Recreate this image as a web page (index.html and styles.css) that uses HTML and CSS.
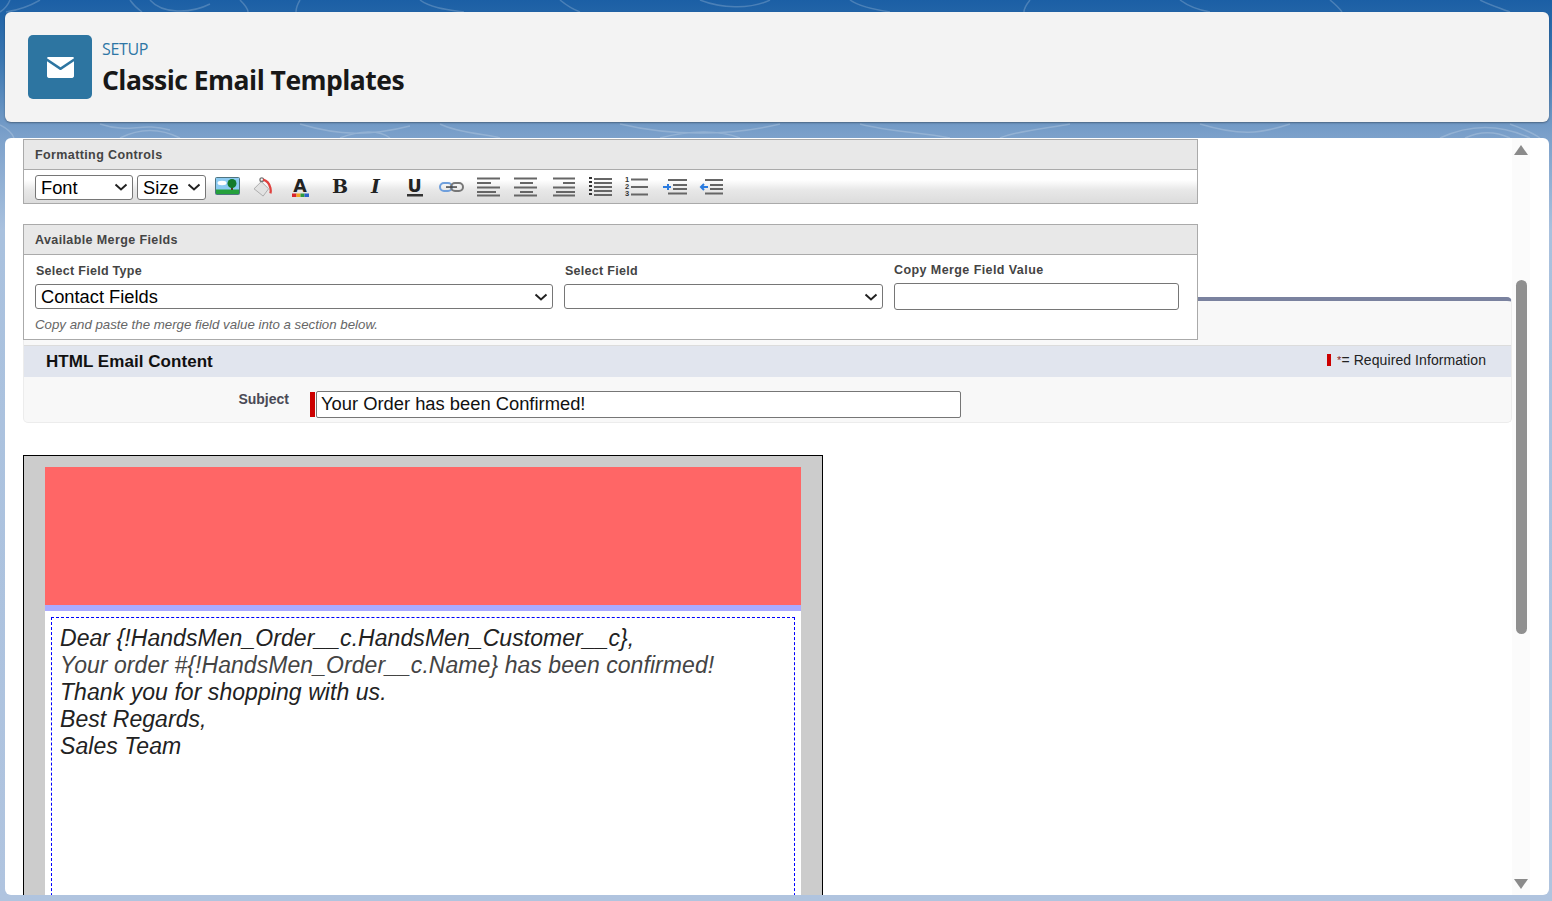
FILE: index.html
```html
<!DOCTYPE html>
<html lang="en">

<head>
    <meta charset="UTF-8">
    <meta name="viewport" content="width=device-width, initial-scale=1.0">
    <title>Classic Email Templates</title>
    <link rel="stylesheet" href="styles.css">
</head>

<body>
    <svg class="contours" viewBox="0 0 1552 901" aria-hidden="true">
        <g fill="none" stroke="#fff" stroke-opacity="0.2" stroke-width="1.5">
            <path d="M10 0C8 5 5 9 0 12M40 0c-10 6-22 10-34 12M130 0c4 6 8 9 12 12M150 0c12 14 40 14 60 4M240 0c6 6 8 9 8 12M300 0c-3 5-4 8-4 12M420 0c10 8 30 10 44 12M560 0c6 5 12 9 20 12M700 0c20 8 50 10 70 0M850 0c10 7 26 10 40 12M1030 0c-4 5-6 8-6 12M1180 0c8 6 18 10 30 12M1330 0c6 5 10 9 12 12M1480 0c10 5 20 8 30 12"/>
            <path d="M100 124c30 10 40-2 70 6M120 138c20-10 40-10 60 0M300 124c40 12 70 12 110 2M340 138c20-8 40-8 50 0M440 124c20 10 50 10 60 14M620 124c50 12 110 12 160 0M660 138c30-8 60-8 80 0M860 124c30 8 60 8 90 14M1000 138c20-8 50-10 70-14M1200 124c40 12 60 10 90 0M1440 138c30-14 60-14 90 0M1465 138c15-7 30-7 45 0"/>
            <path d="M0 125c8 4 12 8 14 13M1510 124c10 4 22 8 30 14"/>
        </g>
    </svg>

    <header class="page-header">
        <div class="header-icon">
            <svg width="27" height="21" viewBox="1 1 26 20">
                <path fill="#fff" d="M2.500 1h23c.8 0 1.400.4 1.500 1.100L14 10.800 1 2.100C1.100 1.400 1.700 1 2.500 1z"/>
                <path fill="#fff" d="M1 5l12.500 8.300c.3.200.7.200 1 0L27 5v14.200c0 1-.8 1.800-1.800 1.800H2.800c-1 0-1.800-.8-1.800-1.800z"/>
            </svg>
        </div>
        <div class="header-text">
            <div class="header-eyebrow">SETUP</div>
            <h1 class="header-title">Classic Email Templates</h1>
        </div>
    </header>

    <main class="content-panel">
        <div class="content">
            <section class="tool-box">
                <h2 class="tool-box-title">Formatting Controls</h2>
                <div class="toolbar">
                    <select class="select font-select"><option>Font</option></select>
                    <select class="select size-select"><option>Size</option></select>
                    <div class="toolbar-icons">
                        <svg class="tool" viewBox="0 0 25 20">
                            <rect x="0.500" y="0.500" width="24" height="17" rx="1" fill="#8ccbf2" stroke="#4f7480"/>
                            <rect x="1" y="12.500" width="23" height="4.500" fill="#25a03c"/>
                            <ellipse cx="7" cy="6" rx="4.500" ry="2.200" fill="#fff"/>
                            <rect x="16" y="8" width="2" height="5" fill="#5a3c1a"/>
                            <circle cx="17" cy="6.500" r="4.500" fill="#137a2a"/>
                        </svg>
                        <svg class="tool" viewBox="0 0 25 22">
                            <path d="M1 13l8-8 8 8-6 8z" fill="#e2e2e2" stroke="#a8a8a8"/>
                            <circle cx="9.500" cy="3" r="2" fill="none" stroke="#777" stroke-width="1.500"/>
                            <path d="M11 3c4 1 7 5 8 9 .5 2 .5 4 0 6" fill="none" stroke="#e0413e" stroke-width="2.500"/>
                        </svg>
                        <svg class="tool" viewBox="0 0 25 20">
                            <text x="11" y="15" class="tool-letter tool-sans">A</text>
                            <rect x="3" y="16.500" width="4.500" height="3.500" fill="#d9232b"/>
                            <rect x="7.500" y="16.500" width="4" height="3.500" fill="#f2a51e"/>
                            <rect x="11.500" y="16.500" width="4" height="3.500" fill="#2c9c3f"/>
                            <rect x="15.500" y="16.500" width="4.500" height="3.500" fill="#2a62c9"/>
                        </svg>
                        <svg class="tool" viewBox="0 0 25 20"><text x="14" y="16" class="tool-letter">B</text></svg>
                        <svg class="tool" viewBox="0 0 25 20"><text x="12.500" y="16" class="tool-letter tool-italic">I</text></svg>
                        <svg class="tool" viewBox="0 0 25 20">
                            <text x="14.500" y="15" class="tool-letter tool-sans">U</text>
                            <rect x="7" y="17" width="16" height="2.500" fill="#333"/>
                        </svg>
                        <svg class="tool" viewBox="0 0 25 20">
                            <rect x="3" y="6" width="12" height="8" rx="4" fill="none" stroke="#6f9fdc" stroke-width="2"/>
                            <rect x="14" y="6" width="12" height="8" rx="4" fill="none" stroke="#777" stroke-width="2"/>
                            <rect x="9" y="9.300" width="11" height="1.500" fill="#444"/>
                        </svg>
                        <svg class="tool" viewBox="0 0 25 20"><path class="lines" d="M3 1.500h23M3 6h14M3 10.500h23M3 15h19M3 18.500h23"/></svg>
                        <svg class="tool" viewBox="0 0 25 20"><path class="lines" d="M3 1.500h23M9 6h13M3 10.500h23M9 15h13M3 18.500h23"/></svg>
                        <svg class="tool" viewBox="0 0 25 20"><path class="lines" d="M5 1.500h22M15 6h12M5 10.500h22M8 15h19M5 18.500h22"/></svg>
                        <svg class="tool" viewBox="0 0 25 20">
                            <path class="lines" d="M9 2h18M9 6h18M9 10h18M9 14h18M9 18h18"/>
                            <path class="dots" d="M5.500 0v20"/>
                        </svg>
                        <svg class="tool" viewBox="0 0 25 20">
                            <path class="lines" d="M9 2.500h17M9 10h17M9 17.500h17"/>
                            <text x="5" y="5" class="tool-num">1</text>
                            <text x="5" y="12" class="tool-num">2</text>
                            <text x="5" y="19" class="tool-num">3</text>
                        </svg>
                        <svg class="tool" viewBox="0 0 25 20">
                            <path class="lines" d="M9 3h19M14 8h14M14 12h14M9 16.500h19"/>
                            <path class="arrow" d="M4 10h8M9 7v6"/>
                        </svg>
                        <svg class="tool" viewBox="0 0 25 20">
                            <path class="lines" d="M9 3h18M14 8h13M14 12h13M9 16.500h18"/>
                            <path class="arrow" d="M5 10h7M8 7l-3 3 3 3"/>
                        </svg>
                    </div>
                </div>
            </section>

            <section class="tool-box merge-box">
                <h2 class="tool-box-title">Available Merge Fields</h2>
                <div class="merge-body">
                    <div class="merge-row">
                        <div class="merge-col col-type">
                            <label class="merge-label">Select Field Type</label>
                            <select class="select field-select"><option>Contact Fields</option></select>
                        </div>
                        <div class="merge-col col-field">
                            <label class="merge-label">Select Field</label>
                            <select class="select field-select"><option></option></select>
                        </div>
                        <div class="merge-col col-copy">
                            <label class="merge-label">Copy Merge Field Value</label>
                            <input class="copy-input" type="text">
                        </div>
                    </div>
                    <p class="merge-hint">Copy and paste the merge field value into a section below.</p>
                </div>
            </section>

            <section class="form-block">
                <div class="form-spacer"></div>
                <div class="form-heading">
                    <h3>HTML Email Content</h3>
                    <span class="req-legend"><i class="req-mark"></i><span class="req-star">*</span>= Required Information</span>
                </div>
                <div class="subject-row">
                    <label class="subject-label">Subject</label>
                    <i class="req-bar"></i>
                    <input class="subject-input" type="text" value="Your Order has been Confirmed!">
                </div>
            </section>

            <section class="letterhead">
                <div class="letter-top"></div>
                <div class="letter-rule"></div>
                <div class="letter-page">
                    <div class="letter-text">
                        <div>Dear {!HandsMen_Order__c.HandsMen_Customer__c},</div>
                        <div class="grey-line">Your order #{!HandsMen_Order__c.Name} has been confirmed!</div>
                        <div>Thank you for shopping with us.</div>
                        <div>Best Regards,</div>
                        <div>Sales Team</div>
                    </div>
                </div>
            </section>
        </div>

        <div class="scroll-track">
            <i class="arrow-up"></i>
            <i class="scroll-thumb"></i>
            <i class="arrow-down"></i>
        </div>
    </main>
</body>

</html>
```

FILE: styles.css
```css
html,
body {
    height: 100%;
}

body {
    position: relative;
    box-sizing: border-box;
    height: 901px;
    margin: 0;
    padding: 12px 3px 6px 5px;
    overflow: hidden;
    display: flex;
    flex-direction: column;
    gap: 16px;
    font-family: "Liberation Sans", Arial, sans-serif;
    background: linear-gradient(180deg, #1b5fa5 0, #3a76b0 60px, #7ba0ca 135px, #a9c1de 230px, #b0c4df 100%);
}

.contours {
    position: absolute;
    top: 0;
    left: 0;
    width: 1552px;
    height: 901px;
}

/* header card */
.page-header {
    position: relative;
    flex: none;
    box-sizing: border-box;
    height: 110px;
    display: flex;
    align-items: center;
    gap: 10px;
    padding: 0 23px;
    background-color: #f3f3f3;
    border-radius: 6px;
    box-shadow: 0 1px 2px rgba(0, 0, 0, 0.35);
}

.header-icon {
    width: 64px;
    height: 64px;
    display: flex;
    align-items: center;
    justify-content: center;
    background-color: #2d75a1;
    border-radius: 5px;
}

.header-text {
    margin-top: 1px;
}

.header-eyebrow {
    font-family: "Open Sans", sans-serif;
    font-size: 16px;
    line-height: 22px;
    letter-spacing: -0.35px;
    color: #2e76a5;
}

.header-title {
    margin: 2px 0 0;
    font-family: "Open Sans", sans-serif;
    font-size: 26.500px;
    font-weight: 700;
    line-height: 36px;
    letter-spacing: -0.52px;
    color: #181818;
}

/* main white panel */
.content-panel {
    position: relative;
    flex: 1;
    min-height: 0;
    display: flex;
    overflow: hidden;
    background-color: #fff;
    border-radius: 6px;
}

.content {
    flex: none;
    width: 1489px;
    padding: 1px 0 0 18px;
}

.tool-box {
    position: relative;
    z-index: 1;
    box-sizing: border-box;
    width: 1175px;
    margin-bottom: 20px;
    background-color: #fff;
    border: 1px solid #aaa;
}

.tool-box-title {
    margin: 0;
    box-sizing: border-box;
    height: 30px;
    padding-left: 11px;
    font-size: 12.500px;
    font-weight: 700;
    line-height: 31px;
    letter-spacing: 0.39px;
    color: #444;
    background-color: #e8e8e8;
    border-bottom: 1px solid #aaa;
}

.toolbar {
    box-sizing: border-box;
    height: 33px;
    display: flex;
    align-items: center;
    padding: 1px 0 0 11px;
    background: linear-gradient(180deg, #fff 0, #fff 30%, #e8e8e8 60%, #dcdcdc 100%);
}

.select {
    box-sizing: border-box;
    padding: 0 0 0 5px;
    font-family: "Liberation Sans", Arial, sans-serif;
    font-size: 18.300px;
    color: #000;
    appearance: none;
    background: #fff url("data:image/svg+xml,%3Csvg xmlns='http://www.w3.org/2000/svg' width='14' height='8' viewBox='0 0 14 8'%3E%3Cpath d='M1.500 1.500L7 6.500l5.500-5' fill='none' stroke='%23222' stroke-width='2'/%3E%3C/svg%3E") no-repeat right 4px center;
    border: 1px solid #767676;
    border-radius: 3px;
}

.font-select {
    width: 98px;
    height: 25px;
    margin-right: 4px;
}

.size-select {
    width: 69px;
    height: 25px;
    margin-right: 9px;
}

.toolbar-icons {
    display: flex;
    gap: 12px;
    height: 20px;
    margin-top: -1px;
}

.tool {
    width: 25px;
    height: 20px;
    overflow: visible;
}

.tool-letter {
    font-family: "DejaVu Serif", serif;
    font-size: 19px;
    font-weight: 700;
    text-anchor: middle;
    fill: #222;
}

.tool-sans {
    font-family: "DejaVu Sans", sans-serif;
    font-size: 17.500px;
}

.tool-italic {
    font-style: italic;
}

.tool-num {
    font-family: "Liberation Sans", sans-serif;
    font-size: 7.500px;
    font-weight: 700;
    fill: #333;
    text-anchor: middle;
}

.lines {
    fill: none;
    stroke: #666;
    stroke-width: 2;
}

.dots {
    fill: none;
    stroke: #333;
    stroke-width: 3;
    stroke-dasharray: 2 2;
}

.arrow {
    fill: none;
    stroke: #2a7be0;
    stroke-width: 2;
}

/* merge fields */
.merge-body {
    height: 84px;
    box-sizing: border-box;
    padding-top: 8px;
}

.merge-row {
    display: flex;
}

.merge-col {
    display: flex;
    flex-direction: column;
}

.merge-label {
    padding-left: 1px;
    font-size: 12.500px;
    font-weight: 700;
    line-height: 16px;
    letter-spacing: 0.28px;
    color: #444;
    margin-bottom: 5px;
}

.col-type {
    width: 518px;
    margin-left: 11px;
    margin-right: 11px;
}

.col-field {
    width: 319px;
    margin-right: 11px;
}

.col-copy {
    width: 285px;
    margin-top: -1px;
}

.col-copy .merge-label {
    padding-left: 0;
    letter-spacing: 0.42px;
}

.field-select {
    width: 100%;
    height: 25px;
}

.copy-input {
    box-sizing: border-box;
    width: 285px;
    height: 27px;
    background-color: #fff;
    border: 1px solid #767676;
    border-radius: 3px;
}

.merge-hint {
    margin: 7px 0 0 11px;
    font-size: 13.270px;
    font-style: italic;
    line-height: 16px;
    color: #666;
}

/* form block under the merge panel */
.form-block {
    box-sizing: border-box;
    width: 1489px;
    height: 126px;
    margin-top: -63px;
    margin-bottom: 32px;
    background-color: #f8f8f8;
    border: 1px solid #ececec;
    border-top: 4px solid #7a829f;
    border-radius: 5px;
}

.form-spacer {
    height: 44px;
    border-bottom: 1px solid #dcdcdc;
}

.form-heading {
    height: 31px;
    display: flex;
    align-items: center;
    justify-content: space-between;
    padding: 0 25px 0 22px;
    background-color: #e1e5ee;
}

.form-heading h3 {
    margin: 0;
    font-size: 17px;
    font-weight: 700;
    letter-spacing: 0.05px;
    color: #111;
}

.req-legend {
    display: flex;
    align-items: center;
    margin-top: -3px;
    font-size: 14px;
    letter-spacing: 0.08px;
    color: #222;
}

.req-mark {
    width: 4px;
    height: 12px;
    margin-right: 6px;
    margin-top: -1px;
    background-color: #c00;
}

.req-star {
    color: #8a1c1c;
    font-size: 11px;
}

.subject-row {
    display: flex;
    align-items: flex-start;
    padding-top: 14px;
}

.subject-label {
    box-sizing: border-box;
    width: 265px;
    text-align: right;
    font-size: 14px;
    font-weight: 700;
    line-height: 16px;
    color: #4a4a56;
}

.req-bar {
    width: 5px;
    height: 25px;
    margin-left: 21px;
    margin-top: 1px;
    background-color: #c00;
    margin-right: 1px;
}

.subject-input {
    box-sizing: border-box;
    width: 645px;
    height: 27px;
    padding: 0 4px 2px;
    font-family: "Liberation Sans", Arial, sans-serif;
    font-size: 18.350px;
    color: #111;
    background-color: #fff;
    border: 1px solid #767676;
    border-radius: 2px;
}

/* letterhead preview */
.letterhead {
    box-sizing: border-box;
    width: 800px;
    height: 700px;
    padding: 11px 21px 0;
    background-color: #ccc;
    border: 1px solid #000;
}

.letter-top {
    height: 138px;
    background-color: #f66;
}

.letter-rule {
    height: 6px;
    background-color: #aaf;
}

.letter-page {
    height: 500px;
    padding: 6px 6px 0;
    background-color: #fff;
}

.letter-text {
    height: 500px;
    box-sizing: border-box;
    padding: 7px 8px;
    font-size: 23px;
    font-style: italic;
    line-height: 27px;
    letter-spacing: 0.06px;
    color: #222;
    border: 1px dashed #00f;
}

.grey-line {
    color: #444;
}

/* scrollbar */
.scroll-track {
    flex: none;
    width: 18px;
    display: flex;
    flex-direction: column;
    align-items: center;
    background-color: #fbfbfb;
}

.arrow-up {
    width: 0;
    height: 0;
    margin-top: 7px;
    border-left: 7px solid transparent;
    border-right: 7px solid transparent;
    border-bottom: 10px solid #8a8a8a;
}

.scroll-thumb {
    width: 11px;
    height: 354px;
    margin-top: 125px;
    background-color: #8f8f8f;
    border-radius: 6px;
}

.arrow-down {
    width: 0;
    height: 0;
    margin-top: auto;
    margin-bottom: 6px;
    border-left: 7px solid transparent;
    border-right: 7px solid transparent;
    border-top: 10px solid #8a8a8a;
}
```
